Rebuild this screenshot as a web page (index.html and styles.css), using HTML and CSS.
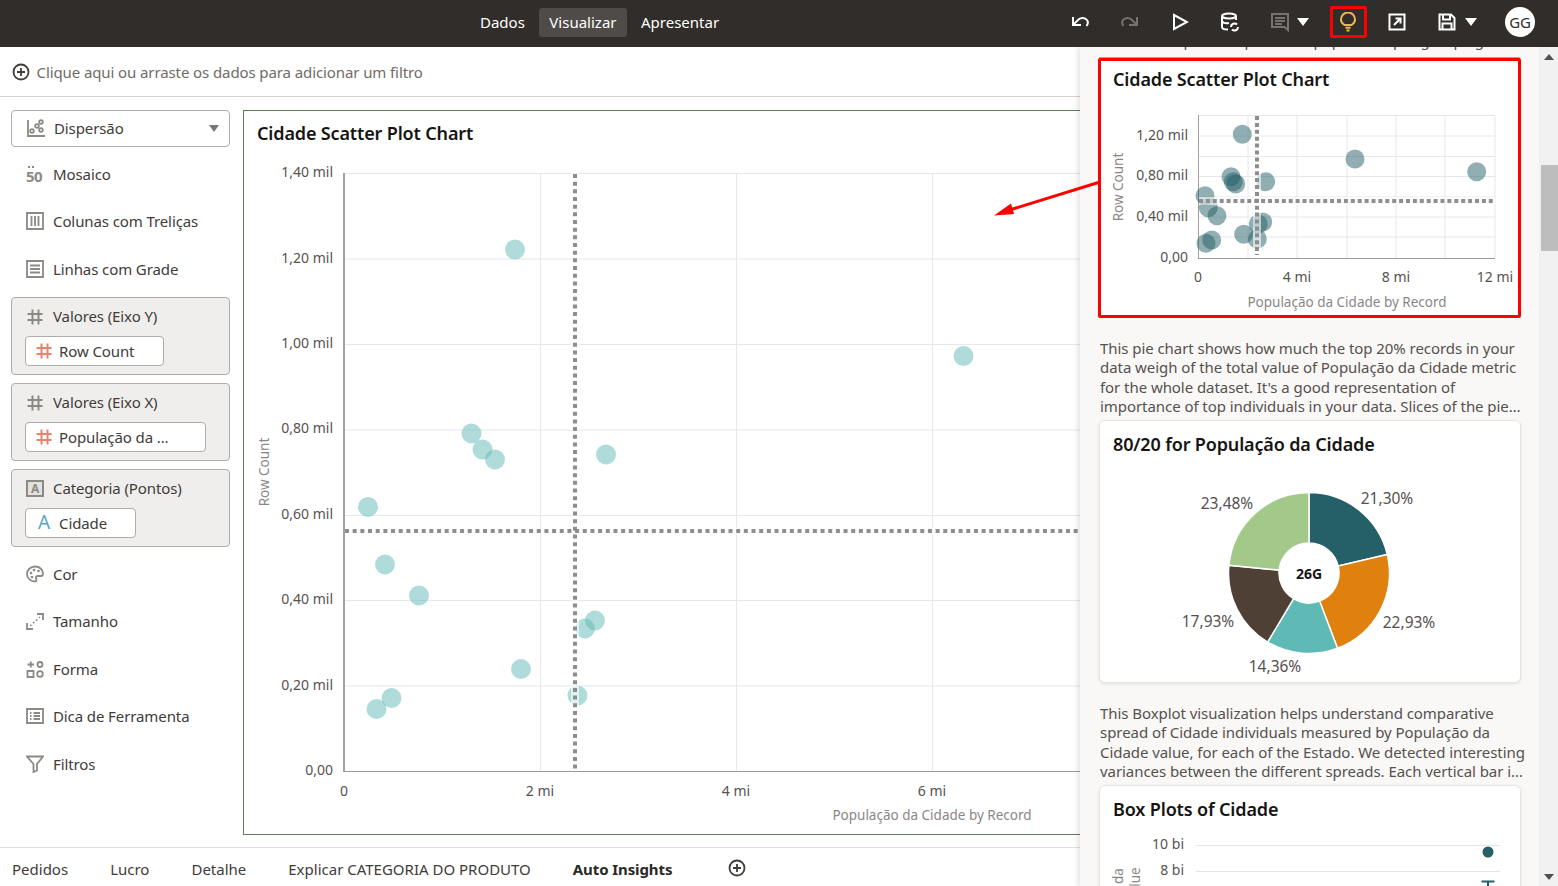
FILE: index.html
```html
<!DOCTYPE html>
<html lang="pt-BR">
<head>
  <meta charset="UTF-8">
  <title>Auto Insights</title>
  <link rel="stylesheet" href="styles.css">
</head>
<body>
<div class="app">
  <header class="topbar">
    <nav class="modes">
      <a class="mode">Dados</a>
      <a class="mode active">Visualizar</a>
      <a class="mode">Apresentar</a>
    </nav>
    <div class="tools">
      <span class="tool"><svg width="20" height="18" viewBox="0 0 20 18"><path class="ic-w" d="M3 4V12H11M3 12L8.500 6.500C11 4.500 15 4.500 17 7C18.500 9 18 11 16.500 13"/></svg></span>
      <span class="tool"><svg width="20" height="18" viewBox="0 0 20 18"><path class="ic-g" d="M17 4V12H9M17 12L11.500 6.500C9 4.500 5 4.500 3 7C1.500 9 2 11 3.500 13"/></svg></span>
      <span class="tool"><svg width="18" height="18" viewBox="0 0 18 18"><path class="ic-w" d="M3 2L16 9L3 16Z"/></svg></span>
      <span class="tool"><svg width="20" height="20" viewBox="0 0 20 20"><ellipse class="ic-w" cx="9" cy="4" rx="7" ry="2.500"/><path class="ic-w" d="M2 4V15C2 17 5 17.500 8 17.500M16 4V8M2 9.500C4 11.500 7 11.500 9 11"/><path class="ic-w" d="M11 15A3.500 3.500 0 0 1 17 12.500M18 15A3.500 3.500 0 0 1 12 17.500"/></svg></span>
      <span class="tool wide comment"><svg width="20" height="20" viewBox="0 0 20 20"><path class="ic-g" d="M2 2H18V18L14.500 15H2ZM5 6H15M5 9H15M5 12H12"/></svg><i class="caret"></i></span>
      <span class="tool bulb"><svg width="18" height="20" viewBox="0 0 18 20"><path class="ic-y" d="M5.500 13C3 11.500 2 9.500 2 7.500A7 7 0 0 1 16 7.500C16 9.500 15 11.500 12.500 13ZM6.500 15.800H11.500M7.500 18.500H10.500"/></svg></span>
      <span class="tool"><svg width="18" height="18" viewBox="0 0 18 18"><path class="ic-w" d="M1.500 1.500H16.500V16.500H1.500ZM6 12L12.500 5.500M7.500 5.500H12.500V10.500"/></svg></span>
      <span class="tool wide save"><svg width="18" height="18" viewBox="0 0 18 18"><path class="ic-w" d="M1.500 1.500H13L16.500 5V16.500H1.500ZM5 1.500V6.500H12V1.500M4.500 16.500V10.500H13.500V16.500"/></svg><i class="caret"></i></span>
      <span class="avatar">GG</span>
    </div>
  </header>

  <div class="workspace">
    <main class="main">
      <div class="filterbar">
        <svg width="18" height="18" viewBox="0 0 18 18"><circle class="ic-d" cx="9" cy="9" r="7.500"/><path class="ic-d" d="M9 5V13M5 9H13"/></svg>
        <span>Clique aqui ou arraste os dados para adicionar um filtro</span>
      </div>

      <div class="content">
        <aside class="shelves">
          <div class="type-select">
            <svg class="ico" width="18" height="18" viewBox="0 0 18 18"><path class="ic-s" d="M1 1V17H18"/><circle class="ic-s" cx="5" cy="12" r="1.800"/><circle class="ic-s" cx="10" cy="7" r="1.800"/><circle class="ic-s" cx="14" cy="3" r="1.800"/><circle class="ic-s" cx="14" cy="11" r="1.800"/></svg>
            <span>Dispersão</span>
            <i class="select-caret"></i>
          </div>
          <div class="shelf-list">
            <div class="shelf-row"><span class="ico mosaic">50</span>Mosaico</div>
            <div class="shelf-row"><svg class="ico" width="18" height="18" viewBox="0 0 18 18"><path class="ic-s" d="M1 1H17V17H1ZM5.500 4V14M9 4V14M12.500 4V14"/></svg>Colunas com Treliças</div>
            <div class="shelf-row"><svg class="ico" width="18" height="18" viewBox="0 0 18 18"><path class="ic-s" d="M1 1H17V17H1ZM4 5.500H14M4 9H14M4 12.500H14"/></svg>Linhas com Grade</div>
          </div>

          <section class="shelf-group">
            <div class="group-title"><svg class="ico" width="18" height="18" viewBox="0 0 18 18"><path class="ic-h" d="M6.500 1.500V16.500M12.500 1.500V16.500M1.500 6H16.500M1.500 12H16.500"/></svg>Valores (Eixo Y)</div>
            <div class="pill pill-y"><svg width="18" height="18" viewBox="0 0 18 18"><path class="ic-o" d="M6.500 1.500V16.500M12.500 1.500V16.500M1.500 6H16.500M1.500 12H16.500"/></svg>Row Count</div>
          </section>
          <section class="shelf-group">
            <div class="group-title"><svg class="ico" width="18" height="18" viewBox="0 0 18 18"><path class="ic-h" d="M6.500 1.500V16.500M12.500 1.500V16.500M1.500 6H16.500M1.500 12H16.500"/></svg>Valores (Eixo X)</div>
            <div class="pill pill-x"><svg width="18" height="18" viewBox="0 0 18 18"><path class="ic-o" d="M6.500 1.500V16.500M12.500 1.500V16.500M1.500 6H16.500M1.500 12H16.500"/></svg>População da ...</div>
          </section>
          <section class="shelf-group">
            <div class="group-title"><span class="ico cat-a">A</span>Categoria (Pontos)</div>
            <div class="pill pill-cat"><span class="attr-a">A</span>Cidade</div>
          </section>

          <div class="shelf-list">
            <div class="shelf-row"><svg class="ico" width="18" height="18" viewBox="0 0 18 18"><path class="ic-s" d="M9 1.500C4.500 1.500 1 5 1 9C1 13.500 5 16.500 9 16.500C11 16.500 10.500 14.500 10 13.500C9.500 12 10.500 11 12 11H15C16.500 11 17 10 17 8.500C17 4.500 13.500 1.500 9 1.500Z"/><circle class="dot-s" cx="5" cy="8" r="1.300"/><circle class="dot-s" cx="8" cy="5" r="1.300"/><circle class="dot-s" cx="12.500" cy="6" r="1.300"/><circle class="dot-s" cx="6" cy="12" r="1.300"/></svg>Cor</div>
            <div class="shelf-row"><svg class="ico" width="18" height="18" viewBox="0 0 18 18"><path class="ic-s" d="M1 11V17H7M11 2H17V8"/><path class="ic-dash" d="M4 14L14 5"/></svg>Tamanho</div>
            <div class="shelf-row"><svg class="ico" width="18" height="18" viewBox="0 0 18 18"><path class="ic-s" d="M1.500 4.500H8M4.800 1.500V7.500M1.500 11H7.500V17H1.500Z"/><circle class="ic-s" cx="14" cy="4.500" r="2.500"/><circle class="ic-s" cx="14" cy="14" r="2.800"/></svg>Forma</div>
            <div class="shelf-row"><svg class="ico" width="18" height="18" viewBox="0 0 18 18"><path class="ic-s" d="M1 2H17V16H1ZM7.500 6H14M7.500 9H14M7.500 12H14M4 6H5.500M4 9H5.500M4 12H5.500"/></svg>Dica de Ferramenta</div>
            <div class="shelf-row"><svg class="ico" width="18" height="18" viewBox="0 0 18 18"><path class="ic-s" d="M1 1.500H17L11 9V15.500L7.500 17V9Z"/></svg>Filtros</div>
          </div>
        </aside>

        <section class="chart-box">
          <h2 class="chart-title">Cidade Scatter Plot Chart</h2>
          <svg class="main-plot" width="840" height="688" viewBox="244 146 840 688">
            <g class="grid">
              <path d="M345 173.500H1084M345 259H1084M345 344.500H1084M345 430H1084M345 515.500H1084M345 600.500H1084M345 686H1084"/>
              <path d="M540.500 173V771M736.500 173V771M932.500 173V771"/>
            </g>
            <path class="axis-y" d="M344 173V772"/>
            <path class="axis-x" d="M344 771.500H1084"/>
            <g class="pts-light">
              <circle cx="515" cy="249.500" r="10"/><circle cx="963.500" cy="356" r="10"/><circle cx="471.500" cy="433.500" r="10"/>
              <circle cx="482.500" cy="449.500" r="10"/><circle cx="495" cy="459.500" r="10"/><circle cx="606" cy="454.500" r="10"/>
              <circle cx="368" cy="507" r="10"/><circle cx="385" cy="564.500" r="10"/><circle cx="419" cy="595.500" r="10"/>
              <circle cx="585" cy="628.500" r="10"/><circle cx="595" cy="620.500" r="10"/><circle cx="521" cy="669" r="10"/>
              <circle cx="577.500" cy="695.500" r="10"/><circle cx="391.500" cy="698" r="10"/><circle cx="376.500" cy="709" r="10"/>
            </g>
            <path class="halo" d="M575 173V771M345 531H1084"/>
            <path class="refline" d="M575 174V771M345 531H1084"/>
            <g class="tick ticks-y">
              <text x="333" y="171">1,40 mil</text><text x="333" y="257">1,20 mil</text><text x="333" y="342">1,00 mil</text>
              <text x="333" y="427">0,80 mil</text><text x="333" y="513">0,60 mil</text><text x="333" y="598">0,40 mil</text>
              <text x="333" y="684">0,20 mil</text><text x="333" y="769">0,00</text>
            </g>
            <g class="tick ticks-x">
              <text x="344" y="790">0</text><text x="540" y="790">2 mi</text><text x="736" y="790">4 mi</text><text x="932" y="790">6 mi</text>
            </g>
            <text class="axis-name" x="932" y="815" text-anchor="middle">População da Cidade by Record</text>
            <text class="axis-name" transform="translate(264 472) rotate(-90)" text-anchor="middle">Row Count</text>
          </svg>
        </section>
      </div>

      <footer class="tabs">
        <a class="tab">Pedidos</a>
        <a class="tab">Lucro</a>
        <a class="tab">Detalhe</a>
        <a class="tab">Explicar CATEGORIA DO PRODUTO</a>
        <a class="tab current">Auto Insights</a>
        <svg class="tab-add" width="18" height="18" viewBox="0 0 18 18"><circle class="ic-d" cx="9" cy="9" r="7.500"/><path class="ic-d" d="M9 5V13M5 9H13"/></svg>
      </footer>
    </main>

    <aside class="insights">
      <div class="insights-body">
        <p class="stub">This scatter plot compares the population per group against a count of records in your</p>

        <article class="card card-marked">
          <h3 class="card-title">Cidade Scatter Plot Chart</h3>
          <svg class="card-plot" width="416" height="223" viewBox="1101 92 416 223">
            <g class="grid">
              <path d="M1199 115.500H1495M1199 136H1495M1199 156.500H1495M1199 176.500H1495M1199 197H1495M1199 217H1495M1199 237H1495"/>
              <path d="M1248 116V258M1297 116V258M1347 116V258M1396 116V258M1445 116V258M1495 116V258"/>
            </g>
            <path class="axis-y thin" d="M1198.500 115V258"/>
            <path class="axis-x" d="M1198 258.500H1495"/>
            <g class="pts-dark">
              <circle cx="1242.300" cy="134.300" r="9.500"/><circle cx="1355" cy="159" r="9.500"/><circle cx="1476.700" cy="171.700" r="9.500"/>
              <circle cx="1231" cy="176.700" r="9.500"/><circle cx="1233.300" cy="181.700" r="9.500"/><circle cx="1235.700" cy="184" r="9.500"/>
              <circle cx="1265.700" cy="181.700" r="9.500"/><circle cx="1205" cy="195.700" r="9.500"/><circle cx="1208.300" cy="207.700" r="9.500"/>
              <circle cx="1217" cy="215.700" r="9.500"/><circle cx="1258.300" cy="224" r="9.500"/><circle cx="1262.700" cy="222" r="9.500"/>
              <circle cx="1243.700" cy="234.300" r="9.500"/><circle cx="1257.300" cy="239" r="9.500"/><circle cx="1211.700" cy="240" r="9.500"/>
              <circle cx="1206" cy="243.300" r="9.500"/>
            </g>
            <path class="halo" d="M1257 116V255M1199 201H1495"/>
            <path class="refline small" d="M1257 116V255M1199 201H1495"/>
            <g class="tick ticks-y">
              <text x="1188" y="134">1,20 mil</text><text x="1188" y="174">0,80 mil</text><text x="1188" y="215">0,40 mil</text><text x="1188" y="256">0,00</text>
            </g>
            <g class="tick ticks-x">
              <text x="1198" y="276">0</text><text x="1297" y="276">4 mi</text><text x="1396" y="276">8 mi</text><text x="1495" y="276">12 mi</text>
            </g>
            <text class="axis-name" x="1347" y="302" text-anchor="middle">População da Cidade by Record</text>
            <text class="axis-name" transform="translate(1117.500 187) rotate(-90)" text-anchor="middle">Row Count</text>
          </svg>
        </article>

        <p class="blurb">This pie chart shows how much the top 20% records in your<br>data weigh of the total value of População da Cidade metric<br>for the whole dataset. It's a good representation of<br>importance of top individuals in your data. Slices of the pie…</p>

        <article class="card card-pie">
          <h3 class="card-title">80/20 for População da Cidade</h3>
          <svg class="card-plot" width="420" height="225" viewBox="1100 457 420 225">
            <g class="slices">
              <path fill="#255f67" d="M1309 492.500A80.500 80.500 0 0 1 1387.300 554.500L1338.200 566.100A30 30 0 0 0 1309 543Z"/>
              <path fill="#e0800f" d="M1387.300 554.500A80.500 80.500 0 0 1 1337.500 648.300L1319.600 601.100A30 30 0 0 0 1338.200 566.100Z"/>
              <path fill="#5fb9b5" d="M1337.500 648.300A80.500 80.500 0 0 1 1267.600 642.100L1293.600 598.700A30 30 0 0 0 1319.600 601.100Z"/>
              <path fill="#4f4036" d="M1267.600 642.100A80.500 80.500 0 0 1 1228.900 565.300L1279.100 570.100A30 30 0 0 0 1293.600 598.700Z"/>
              <path fill="#a2c98a" d="M1228.900 565.300A80.500 80.500 0 0 1 1309 492.500V543A30 30 0 0 0 1279.100 570.100Z"/>
            </g>
            <text class="pie-total" x="1309" y="573.500" text-anchor="middle">26G</text>
            <g class="pie-label">
              <text x="1227" y="502.500">23,48%</text><text x="1387" y="497.500">21,30%</text><text x="1409" y="621.500">22,93%</text>
              <text x="1275" y="665.500">14,36%</text><text x="1208" y="620.500">17,93%</text>
            </g>
          </svg>
        </article>

        <p class="blurb">This Boxplot visualization helps understand comparative<br>spread of Cidade individuals measured by População da<br>Cidade value, for each of the Estado. We detected interesting<br>variances between the different spreads. Each vertical bar i…</p>

        <article class="card card-box">
          <h3 class="card-title">Box Plots of Cidade</h3>
          <svg class="card-plot" width="420" height="70" viewBox="1100 822 420 70">
            <path class="boxgrid" d="M1196 845.500H1500M1196 871.500H1500"/>
            <g class="tick ticks-y">
              <text x="1184" y="843.500">10 bi</text><text x="1184" y="869.500">8 bi</text>
            </g>
            <circle class="box-dot" cx="1488" cy="852" r="5.500"/>
            <path class="box-whisker" d="M1481.500 881.500H1494.500M1488 881.500V892"/>
            <text class="axis-name" transform="translate(1118 876) rotate(-90)" text-anchor="middle">da</text>
            <text class="axis-name" transform="translate(1135 877) rotate(-90)" text-anchor="middle">lue</text>
          </svg>
        </article>
      </div>

      <div class="scrollbar">
        <i class="arrow-up"></i>
        <div class="thumb"></div>
        <i class="arrow-down"></i>
      </div>
    </aside>
  </div>

  <!-- annotation from the screenshot author -->
  <svg class="callout" width="112" height="50" viewBox="990 175 112 50"><path class="callout-line" d="M1100 182L1008 210.500"/><path class="callout-head" d="M994 215.500L1011 203.500L1014 214Z"/></svg>
</div>
</body>
</html>
```

FILE: styles.css
```css
* {
  box-sizing: border-box;
}
html, body {
  margin: 0;
  height: 100%;
  overflow: hidden;
}
body {
  font-family: "Noto Sans", "Open Sans", sans-serif;
  font-size: 15px;
  letter-spacing: -0.1px;
  color: #403c3a;
  background: #fff;
}
svg {
  display: block;
  flex: none;
}
.app {
  position: relative;
  height: 886px;
  display: flex;
  flex-direction: column;
}

/* top bar */
.topbar {
  height: 47px;
  flex: none;
  display: flex;
  align-items: center;
  background: #312d2a;
  color: #fff;
  padding: 0 23px 3px 470px;
  position: relative;
  z-index: 3;
}
.modes {
  display: flex;
  gap: 4.500px;
  padding-top: 1px;
  letter-spacing: 0;
}
.mode {
  height: 29px;
  line-height: 28px;
  padding: 0 10px;
  border-radius: 3px;
}
.mode.active {
  background: #4f4b48;
}
.tools {
  margin-left: auto;
  display: flex;
  align-items: center;
}
.tool {
  width: 50px;
  height: 32px;
  display: flex;
  align-items: center;
  justify-content: center;
}
.tool.wide {
  width: 70px;
  justify-content: flex-start;
}
.tool.comment {
  padding-left: 15px;
  gap: 7px;
}
.tool.save {
  padding-left: 16px;
  gap: 9px;
}
.tool.bulb {
  width: 37px;
  height: 32px;
  margin: 0 5px;
  border: 3px solid #f00;
  border-radius: 2px;
}
.tool.bulb svg {
  margin-left: -2px;
}
.caret {
  width: 0;
  height: 0;
  border-left: 6px solid transparent;
  border-right: 6px solid transparent;
  border-top: 8px solid #fff;
}
.avatar {
  width: 30px;
  height: 30px;
  margin-left: 13px;
  border-radius: 50%;
  background: #fff;
  color: #312d2a;
  font-size: 15px;
  line-height: 30px;
  text-align: center;
}
.ic-w, .ic-g, .ic-y, .ic-d, .ic-s, .ic-h, .ic-o, .ic-dash {
  fill: none;
  stroke-width: 2;
}
.ic-w { stroke: #fff; }
.ic-g { stroke: #77736f; }
.ic-y { stroke: #e8b84c; }
.ic-d { stroke: #403c3a; stroke-width: 1.800; }
.ic-s { stroke: #8d8985; stroke-width: 1.800; }
.ic-h { stroke: #8d8985; }
.ic-o { stroke: #e9826f; }
.ic-dash { stroke: #8d8985; stroke-dasharray: 2 2; stroke-width: 1.400; }
.dot-s { fill: #8d8985; }

/* main area */
.workspace {
  flex: 1;
  min-height: 0;
  display: flex;
}
.main {
  width: 1080px;
  flex: none;
  overflow: hidden;
  display: flex;
  flex-direction: column;
}
.filterbar {
  height: 50px;
  flex: none;
  display: flex;
  align-items: center;
  gap: 6.500px;
  padding: 1px 0 0 12px;
  border-bottom: 1px solid #d6d3d0;
  color: #6f6b68;
}
.content {
  height: 750px;
  flex: none;
  display: flex;
}
.tabs {
  height: 39px;
  flex: none;
  display: flex;
  align-items: center;
  gap: 42px;
  padding: 3px 0 0 12px;
  border-top: 1px solid #e2e0de;
  letter-spacing: 0;
}
.tab.current {
  font-weight: 700;
  color: #2b2826;
  letter-spacing: -0.1px;
}
.tab-add {
  margin-left: 14px;
  margin-top: -1px;
}

/* shelves */
.shelves {
  width: 243px;
  flex: none;
  padding: 13px 13px 0 11px;
}
.type-select {
  height: 37px;
  display: flex;
  align-items: center;
  gap: 9px;
  padding: 0 10px 2px 15px;
  border: 1px solid #b0aca8;
  border-radius: 4px;
}
.select-caret {
  margin-left: auto;
  margin-top: 2px;
  width: 0;
  height: 0;
  border-left: 5px solid transparent;
  border-right: 5px solid transparent;
  border-top: 7px solid #7b7773;
}
.shelf-list {
  margin: 4px 0 3.250px;
}
.shelf-row {
  height: 47.500px;
  display: flex;
  align-items: center;
  gap: 9px;
  padding-left: 15px;
  padding-bottom: 2px;
}
.ico {
  width: 18px;
  flex: none;
}
.mosaic {
  position: relative;
  font-size: 15px;
  font-weight: 700;
  color: #8d8985;
  line-height: 18px;
  margin-top: 4px;
  letter-spacing: -0.5px;
}
.mosaic::before {
  content: "";
  position: absolute;
  top: -1px;
  left: 2px;
  width: 6px;
  border-top: 2px dotted #8d8985;
}
.shelf-group {
  height: 78px;
  margin-bottom: 8px;
  padding: 0 13px;
  background: #f0eeec;
  border: 1px solid #b0aca8;
  border-radius: 4px;
}
.shelf-group:last-of-type {
  margin-bottom: 0;
}
.group-title {
  height: 38px;
  display: flex;
  align-items: center;
  gap: 9px;
  padding: 0 0 2px 1px;
}
.group-title .ico {
  margin-top: 2px;
}
.cat-a {
  height: 17px;
  margin-top: 3px;
  border: 2px solid #8d8985;
  background: #e4e2e0;
  color: #8d8985;
  font-size: 12px;
  font-weight: 700;
  line-height: 13px;
  text-align: center;
}
.pill {
  height: 30px;
  display: flex;
  align-items: center;
  gap: 6px;
  padding-left: 9px;
  background: #fff;
  border: 1px solid #b0aca8;
  border-radius: 4px;
}
.pill-y { width: 139px; }
.pill-x { width: 181px; }
.pill-cat { width: 111px; }
.attr-a {
  width: 18px;
  font-size: 19px;
  color: #5aa5c8;
  text-align: center;
  line-height: 1;
}

/* chart */
.chart-box {
  width: 900px;
  height: 725px;
  margin-top: 13px;
  flex: none;
  border: 1px solid #5f7d4f;
}
.chart-title, .card-title {
  margin: 0;
  font-size: 18px;
  font-weight: 600;
  line-height: 24px;
  letter-spacing: -0.15px;
  color: #161513;
}
.chart-title {
  padding: 10px 0 1px 13px;
}
.grid path {
  fill: none;
  stroke: #e5e7ec;
  stroke-width: 1;
}
.axis-y {
  fill: none;
  stroke: #a0a0a0;
  stroke-width: 2;
}
.axis-y.thin {
  stroke-width: 1;
}
.axis-x {
  fill: none;
  stroke: #999;
  stroke-width: 1;
}
.pts-light circle {
  fill: #5fb9b5;
  opacity: 0.5;
}
.pts-dark circle {
  fill: #245f66;
  opacity: 0.5;
}
.halo {
  fill: none;
  stroke: #fff;
  stroke-width: 8;
  opacity: 0.6;
}
.refline {
  fill: none;
  stroke: #8e8e8e;
  stroke-width: 4;
  stroke-dasharray: 4 3.670;
}
.refline.small {
  stroke-dasharray: 4 2.900;
}
.tick text {
  font-size: 14px;
  letter-spacing: 0;
  fill: #555250;
  dominant-baseline: central;
}
.ticks-y text {
  text-anchor: end;
}
.ticks-x text {
  text-anchor: middle;
}
.axis-name {
  font-size: 13.500px;
  letter-spacing: 0;
  fill: #8a8785;
  dominant-baseline: central;
}

/* insights panel */
.insights {
  width: 478px;
  flex: none;
  display: flex;
  position: relative;
  z-index: 2;
  background: #f9f8f6;
  box-shadow: -2px 0 6px rgba(0, 0, 0, 0.12);
  overflow: hidden;
}
.insights-body {
  width: 459px;
  flex: none;
  padding-left: 19px;
  overflow: hidden;
}
.stub {
  margin: -16px 0 7.500px 1px;
  line-height: 19.500px;
  white-space: nowrap;
  color: #55514f;
}
.card {
  width: 422px;
  background: #fff;
  border: 1px solid #e8e6e3;
  border-radius: 6px;
  box-shadow: 0 1px 3px rgba(0, 0, 0, 0.1);
}
.card-title {
  padding: 11px 0 1px 13px;
}
.card-marked {
  width: 423px;
  height: 260px;
  margin-left: -1px;
  border: 3px solid #f00;
  border-radius: 2px;
  box-shadow: 0 -2px 0 -1px #9aae8c;
}
.card-marked .card-title {
  padding: 6px 0 1px 12px;
}
.card-pie {
  height: 263px;
}
.card-box {
  height: 110px;
}
.blurb {
  margin: 21px 0 3.400px 1px;
  line-height: 19.400px;
  letter-spacing: -0.06px;
  white-space: nowrap;
  color: #55514f;
}
.slices path {
  stroke: #fff;
  stroke-width: 1.500;
}
.pie-total {
  font-size: 14px;
  font-weight: 700;
  letter-spacing: 0;
  fill: #161513;
  dominant-baseline: central;
}
.pie-label text {
  font-size: 15.500px;
  letter-spacing: 0;
  fill: #55514f;
  text-anchor: middle;
  dominant-baseline: central;
}
.boxgrid {
  fill: none;
  stroke: #e6e5e3;
}
.box-dot {
  fill: #255f67;
}
.box-whisker {
  fill: none;
  stroke: #255f67;
  stroke-width: 2;
}

/* scrollbar */
.scrollbar {
  width: 19px;
  flex: none;
  background: #f1f1f1;
  display: flex;
  flex-direction: column;
  align-items: flex-end;
  position: relative;
}
.thumb {
  width: 17px;
  height: 86px;
  margin-top: 101px;
  background: #bdbdbd;
}
.arrow-up, .arrow-down {
  width: 0;
  height: 0;
  border-left: 5px solid transparent;
  border-right: 5px solid transparent;
  margin-right: 4px;
}
.arrow-up {
  margin-top: 7px;
  border-bottom: 6px solid #505050;
  margin-bottom: 4px;
}
.arrow-down {
  margin-top: auto;
  margin-bottom: 6px;
  border-top: 6px solid #505050;
}

/* red arrow over the chart */
.callout {
  position: absolute;
  left: 990px;
  top: 175px;
  z-index: 4;
}
.callout-line {
  fill: none;
  stroke: #f00;
  stroke-width: 3;
}
.callout-head {
  fill: #f00;
}
```
